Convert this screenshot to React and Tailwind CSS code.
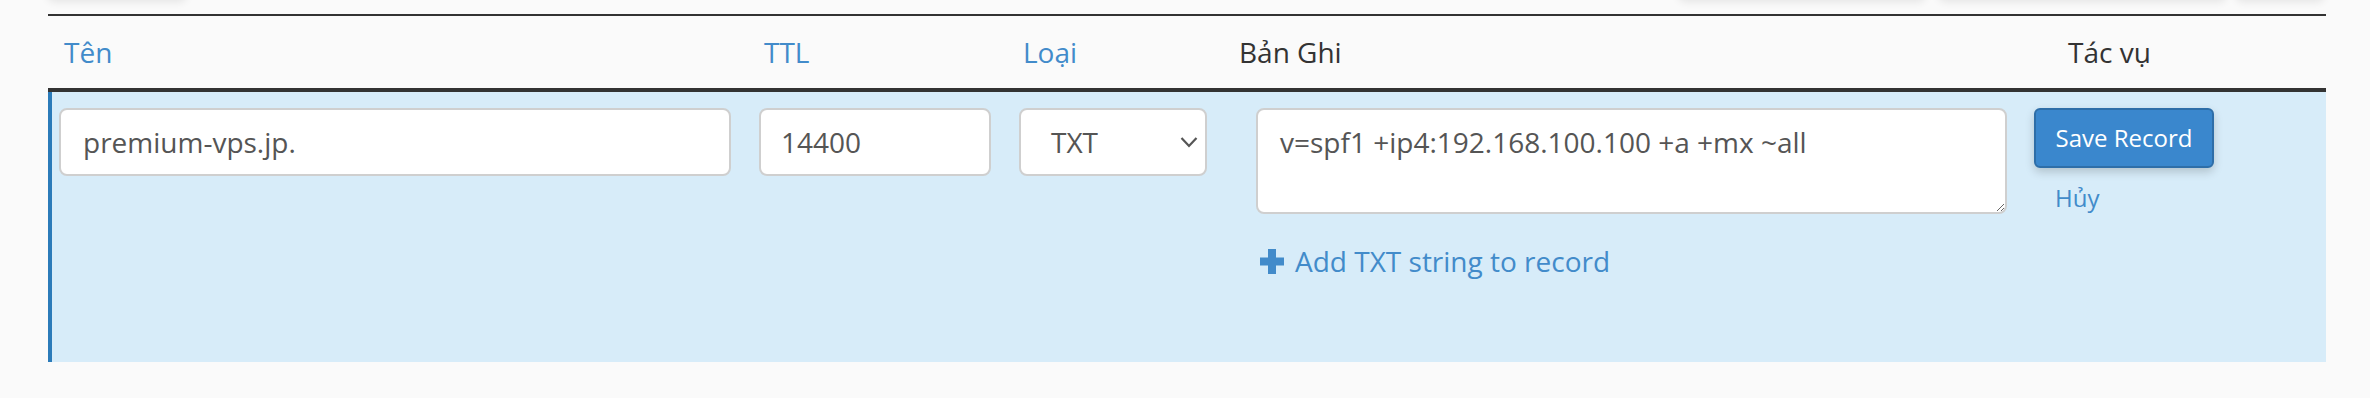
import React from "react";

function Chevron() {
  return (
    <svg width="18" height="12" viewBox="0 0 18 12" className="shrink-0">
      <polyline points="1.5,2 9,10 16.5,2" fill="none" stroke="#555" strokeWidth="2.2" />
    </svg>
  );
}

function Plus() {
  return (
    <svg width="24" height="25" viewBox="0 0 24 25" className="shrink-0">
      <rect x="8" y="0" width="8" height="25" fill="#428bca" />
      <rect x="0" y="8.5" width="24" height="8" fill="#428bca" />
    </svg>
  );
}

export default function App() {
  return (
    <div className="w-[2370px] h-[398px] overflow-hidden bg-[#fafafa] font-['Open_Sans',sans-serif] text-[#333]">
      {/* shadows of buttons above the fold */}
      <div className="flex items-start h-[14px]">
        <div className="ml-[47px] w-[140px] h-[20px] -mt-[21px] rounded-lg bg-[#f6f6f6] shadow-[0_3px_8px_rgba(0,0,0,0.09)]" />
        <div className="ml-[1491px] w-[248px] h-[20px] -mt-[21px] rounded-lg bg-[#f6f6f6] shadow-[0_3px_8px_rgba(0,0,0,0.09)]" />
        <div className="ml-[12px] w-[289px] h-[20px] -mt-[21px] rounded-lg bg-[#f6f6f6] shadow-[0_3px_8px_rgba(0,0,0,0.09)]" />
        <div className="ml-[8px] w-[90px] h-[20px] -mt-[21px] rounded-lg bg-[#f6f6f6] shadow-[0_3px_8px_rgba(0,0,0,0.09)]" />
      </div>

      <div className="ml-[48px] w-[2278px]">
        {/* header */}
        <div className="flex h-[78px] border-t-2 border-b-4 border-[#333] pt-[16px] text-[28px] leading-[40px]">
          <div className="w-[716px] pl-[16px] text-[#428bca]">Tên</div>
          <div className="w-[259px] text-[#428bca]">TTL</div>
          <div className="w-[216px] text-[#428bca]">Loại</div>
          <div className="w-[829px] text-[#333]">Bản Ghi</div>
          <div className="text-[#333]">Tác vụ</div>
        </div>

        {/* editing row */}
        <div className="flex items-start h-[270px] bg-[#d7ecf9] border-l-4 border-[#2b7bb9] pl-[7px] pt-[16px]">
          <input
            defaultValue="premium-vps.jp."
            className="w-[672px] h-[68px] bg-white border-2 border-[#cfcfcf] rounded-[8px] px-[22px] text-[28px] text-[#555] outline-none"
          />
          <input
            defaultValue="14400"
            className="ml-[28px] w-[232px] h-[68px] bg-white border-2 border-[#cfcfcf] rounded-[8px] px-[20px] text-[28px] text-[#555] outline-none"
          />
          <div className="ml-[28px] w-[188px] h-[68px] bg-white border-2 border-[#cfcfcf] rounded-[8px] pl-[30px] pr-[7px] flex items-center justify-between text-[28px] text-[#555]">
            <span>TXT</span>
            <Chevron />
          </div>
          <div className="ml-[49px] flex flex-col">
            <textarea
              defaultValue="v=spf1 +ip4:192.168.100.100 +a +mx ~all"
              className="w-[751px] h-[106px] bg-white border-2 border-[#cfcfcf] rounded-[8px] px-[22px] py-[12px] text-[28px] leading-[40px] text-[#555] outline-none"
            />
            <div className="mt-[27px] ml-[4px] flex items-center text-[28px] leading-[40px] text-[#428bca]">
              <Plus />
              <span className="ml-[11px]">Add TXT string to record</span>
            </div>
          </div>
          <div className="ml-[27px] flex flex-col">
            <button className="w-[180px] h-[60px] bg-[#3a87cd] border-2 border-[#2e6ea8] rounded-[6px] text-white text-[24px] shadow-[0_4px_10px_rgba(0,0,0,0.18)]">
              Save Record
            </button>
            <div className="mt-[13px] pl-[21px] text-[24px] leading-[34px] text-[#428bca]">Hủy</div>
          </div>
        </div>
      </div>
    </div>
  );
}
